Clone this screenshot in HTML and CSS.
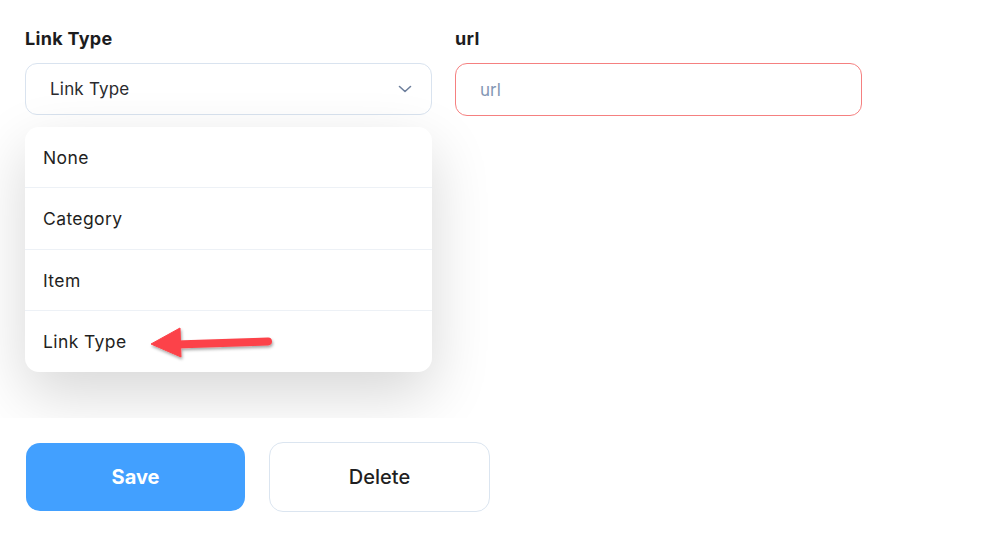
FILE: index.html
```html
<!doctype html>
<html>
    <head>
        <meta charset="utf-8" />
        <title>Link Type</title>
        <link rel="stylesheet" href="styles.css">
    </head>
    <body>
        <div class="form-area">
            <div class="field">
                <label class="field-label">Link Type</label>
                <div class="select-wrap">
                    <div class="select">
                        <span>Link Type</span>
                        <svg class="chevron" width="14" height="8" viewBox="0 0 14 8">
                            <path d="M1.5 1.5 L7 6.5 L12.5 1.5" fill="none" stroke="#6d7f9c" stroke-width="1.6" stroke-linecap="round" stroke-linejoin="round" />
                        </svg>
                    </div>
                    <ul class="menu">
                        <li>None</li>
                        <li>Category</li>
                        <li>Item</li>
                        <li>Link Type</li>
                    </ul>
                    <svg class="pointer" width="140" height="50" viewBox="0 0 140 50">
                        <defs>
                            <filter id="arrow_shadow" x="-20%" y="-40%" width="140%" height="180%">
                                <feDropShadow dx="1" dy="2" stdDeviation="1.6" flood-color="#000" flood-opacity="0.35" />
                            </filter>
                        </defs>
                        <g filter="url(#arrow_shadow)" fill="#fc4349" stroke="#fc4349">
                            <line x1="36" y1="24.5" x2="128" y2="21.5" stroke-width="8" stroke-linecap="round" />
                            <polygon points="11,24 40,8 41,37" stroke-width="1" stroke-linejoin="round" />
                        </g>
                    </svg>
                </div>
            </div>
            <div class="field">
                <label class="field-label">url</label>
                <input class="text-input invalid" type="text" placeholder="url" />
            </div>
        </div>
        <div class="actions">
            <button class="btn btn-primary">Save</button>
            <button class="btn btn-outline">Delete</button>
        </div>
    </body>
</html>
```

FILE: styles.css
```css
body {
    margin: 0;
    background-color: #fff;
    font-family: "Inter", "Noto Sans", sans-serif;
    color: #222;
}

.form-area {
    height: 418px;
    overflow: hidden;
    box-sizing: border-box;
    padding: 28px 0 0 25px;

    display: grid;
    grid-template-columns: 407px 407px;
    column-gap: 23px;
    align-items: start;
}

.field {
    display: flex;
    flex-direction: column;
}

.field-label {
    font-size: 18px;
    font-weight: 700;
    letter-spacing: 0.3px;
    color: #1c1c1e;
    line-height: 22px;
    margin-bottom: 13px;
}

.select-wrap {
    position: relative;
}

.select {
    height: 52px;
    box-sizing: border-box;
    border: 1px solid #d9e3ef;
    border-radius: 12px;
    padding: 0 19px 0 24px;

    display: flex;
    align-items: center;
    justify-content: space-between;

    font-size: 17px;
    letter-spacing: 0.2px;
    color: #2a2a2e;
}

.chevron {
    display: block;
}

.menu {
    position: absolute;
    top: 64px;
    left: 0;
    right: 0;
    margin: 0;
    padding: 0;
    list-style: none;

    background-color: #fff;
    border-radius: 14px;
    box-shadow: 0 22px 60px rgba(0, 0, 0, 0.16);
    overflow: hidden;
}

.menu li {
    height: 62px;
    box-sizing: border-box;
    padding-left: 18px;
    display: flex;
    align-items: center;
    font-size: 17.5px;
    letter-spacing: 0.4px;
    color: #1f1f22;
    border-top: 1px solid #edf1f6;
}

.menu li:first-child {
    height: 60px;
    border-top: none;
}

.menu li:nth-child(3) {
    height: 61px;
}

.pointer {
    position: absolute;
    left: 115px;
    top: 257px;
}

.text-input {
    height: 53px;
    box-sizing: border-box;
    border: 1px solid #d9e3ef;
    border-radius: 12px;
    padding: 0 24px;
    font-family: inherit;
    font-size: 17px;
    outline: none;
}

.text-input::placeholder {
    color: #8497b4;
}

.text-input.invalid {
    border-color: #f58080;
}

.actions {
    display: flex;
    align-items: center;
    gap: 24px;
    padding: 24px 0 0 26px;
}

.btn {
    font-family: inherit;
    font-size: 20px;
    border-radius: 14px;
    cursor: pointer;
}

.btn-primary {
    width: 219px;
    height: 68px;
    border: none;
    background-color: #42a0ff;
    color: #fff;
    font-weight: 700;
}

.btn-outline {
    width: 221px;
    height: 70px;
    border: 1px solid #dbe5f0;
    background-color: #fff;
    color: #1f1f22;
    font-weight: 500;
}
```
